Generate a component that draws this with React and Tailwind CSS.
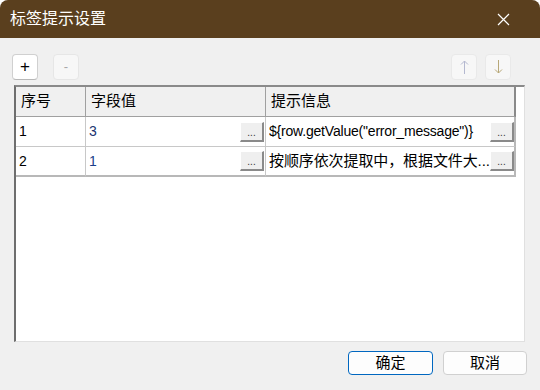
import React from "react";

const font = { fontFamily: '"Liberation Sans", "Noto Sans CJK SC", sans-serif' };

function DotsButton() {
  return (
    <div className="w-[24px] h-[20px] shrink-0 bg-[#efefef] border-t border-l border-t-[#ffffff] border-l-[#ffffff] border-b-2 border-r-2 border-b-[#8a8a8a] border-r-[#8a8a8a] flex items-end justify-center pb-[2px] text-[10px] leading-none text-[#333]">
      ...
    </div>
  );
}

function HeaderCell({ children, last }) {
  return (
    <div
      className={
        "h-[30px] bg-[#f0f0f0] border-b border-b-[#a0a0a0] flex items-center pl-[5px] text-[15px] text-black " +
        (last ? "border-r-2 border-r-[#8a8a8a]" : "border-r border-r-[#a0a0a0]")
      }
    >
      {children}
    </div>
  );
}

function Cell({ children, btn, last, color, bottom }) {
  return (
    <div
      className={
        "h-[30px] bg-white flex items-center pl-[3px] " +
        (bottom ? "border-b-2 border-b-[#b8b8b8] " : "border-b border-b-[#c8c8c8] ") +
        (last ? "border-r-2 border-r-[#b8b8b8] pr-[0px]" : "border-r border-r-[#c8c8c8] pr-[1px]")
      }
    >
      <span className={"flex-1 min-w-0 whitespace-nowrap overflow-hidden " + color}>{children}</span>
      {btn && <DotsButton />}
    </div>
  );
}

export default function App() {
  return (
    <div className="w-[540px] h-[390px] bg-white" style={font}>
      <div className="w-[540px] h-[390px] flex flex-col bg-[#f0f0f0] rounded-t-[8px] overflow-hidden">
        <div className="h-[38px] shrink-0 bg-[#5a3f1e] flex items-center justify-between pl-[10px] pr-[30px]">
          <span className="text-white text-[16px] leading-none">标签提示设置</span>
          <svg width="13" height="13" viewBox="0 0 13 13" className="block">
            <path d="M1 1 L12 12 M12 1 L1 12" stroke="#ffffff" strokeWidth="1.2" fill="none" />
          </svg>
        </div>

        <div className="flex-1 flex flex-col px-3 pt-[16px]">
          <div className="h-[26px] flex items-center justify-between">
            <div className="flex gap-[15px]">
              <div className="w-[26px] h-[26px] bg-white border border-[#d0d0d0] border-b-[#b8b8b8] rounded-[4px] flex items-center justify-center text-[17px] text-black">
                +
              </div>
              <div className="w-[26px] h-[26px] bg-[#f7f7f7] border border-[#e6e6e6] rounded-[4px] flex items-center justify-center text-[13px] text-[#a8a8a8]">
                -
              </div>
            </div>
            <div className="flex gap-[8px] mr-[17px]">
              <div className="w-[26px] h-[26px] bg-[#f7f7f7] border border-[#e9e9e9] rounded-[4px] flex items-center justify-center">
                <svg width="9" height="16" viewBox="0 0 9 16" className="block">
                  <path d="M4.5 2 V15 M1 5.5 L4.5 2 L8 5.5" stroke="#b4b8d0" strokeWidth="1" fill="none" />
                </svg>
              </div>
              <div className="w-[26px] h-[26px] bg-[#f7f7f7] border border-[#e9e9e9] rounded-[4px] flex items-center justify-center">
                <svg width="9" height="16" viewBox="0 0 9 16" className="block">
                  <path d="M4.5 1 V14 M1 10.5 L4.5 14 L8 10.5" stroke="#b8a878" strokeWidth="1" fill="none" />
                </svg>
              </div>
            </div>
          </div>

          <div className="mt-[5px] ml-[2px] mr-[3px] h-[257px] bg-white border-l-2 border-t-2 border-l-[#6e6e6e] border-t-[#8a8a8a] border-r border-b border-r-[#e0e0e0] border-b-[#e0e0e0]">
            <div className="grid grid-cols-[70px_180px_250px]">
              <HeaderCell>序号</HeaderCell>
              <HeaderCell>字段值</HeaderCell>
              <HeaderCell last>提示信息</HeaderCell>

              <Cell color="text-black text-[14px]">1</Cell>
              <Cell btn color="text-[#1a3570] text-[14px]">3</Cell>
              <Cell btn last color="text-black text-[14px] tracking-[-0.2px]">{'${row.getValue("error_message")}'}</Cell>

              <Cell bottom color="text-black text-[14px]">2</Cell>
              <Cell bottom btn color="text-[#1a3f8a] text-[14px]">1</Cell>
              <Cell bottom btn last color="text-black text-[15px] tracking-[-0.1px]">按顺序依次提取中，根据文件大...</Cell>
            </div>
          </div>

          <div className="mt-[9px] flex justify-end gap-[10px] mr-[1px]">
            <div className="w-[85px] h-[24px] bg-[#fdfdfd] border border-[#0067c0] rounded-[4px] flex items-center justify-center text-[15px] text-black">
              确定
            </div>
            <div className="w-[84px] h-[24px] bg-[#fdfdfd] border border-[#d0d0d0] rounded-[4px] flex items-center justify-center text-[15px] text-black">
              取消
            </div>
          </div>
        </div>
      </div>
    </div>
  );
}
